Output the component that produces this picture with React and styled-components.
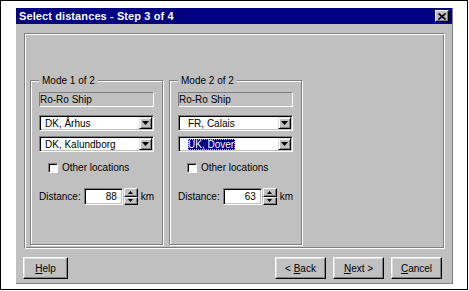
import React from "react";
import styled, { createGlobalStyle } from "styled-components";

const GlobalStyle = createGlobalStyle`
    body {
        margin: 0;
        background: #ffffff;
        font-family: "Liberation Sans", Arial, sans-serif;
    }
`;

const Frame = styled.div`
    width: 468px;
    height: 290px;
    box-sizing: border-box;
    border: 1px solid #000000;
    padding: 7px 0 0 15px;
`;

const Dialog = styled.div`
    width: 437px;
    height: 276px;
    box-sizing: border-box;
    background: #c0c0c0;
    border-right: 1px solid #808080;
    border-bottom: 1px solid #808080;
    display: flex;
    flex-direction: column;
`;

const TitleBar = styled.div`
    height: 16px;
    flex: none;
    background: #000080;
    display: flex;
    align-items: center;
    justify-content: space-between;
    padding: 0 3px 0 3px;
`;

const Title = styled.span`
    color: #ffffff;
    font-weight: bold;
    font-size: 11px;
    line-height: 16px;
    letter-spacing: 0.1px;
`;

const CloseButton = styled.div`
    width: 14px;
    height: 12px;
    box-sizing: border-box;
    background: #c0c0c0;
    border: 1px solid;
    border-color: #ffffff #000000 #000000 #ffffff;
    box-shadow: inset -1px -1px #808080;
    display: flex;
    align-items: center;
    justify-content: center;
`;

const Body = styled.div`
    padding: 9px 7px 0 8px;
`;

const Panel = styled.div`
    height: 216px;
    box-sizing: border-box;
    border: 1px solid;
    border-color: #808080 #ffffff #ffffff #808080;
    box-shadow: inset 1px 1px #ffffff, inset -1px -1px #808080;
    padding: 46px 0 0 5px;
    display: flex;
    gap: 6px;
`;

const Group = styled.div`
    position: relative;
    width: 133px;
    height: 165px;
    box-sizing: border-box;
    border: 1px solid #808080;
    box-shadow: 1px 1px 0 #ffffff, inset 1px 1px 0 #ffffff;
    padding: 11px 8px 0 8px;
    display: flex;
    flex-direction: column;
`;

const Legend = styled.span`
    position: absolute;
    top: -7px;
    left: 8px;
    padding: 0 3px;
    background: #c0c0c0;
    font-size: 10px;
    line-height: 13px;
    color: #000000;
`;

const StaticField = styled.div`
    height: 15px;
    box-sizing: border-box;
    border: 1px solid;
    border-color: #808080 #ffffff #ffffff #808080;
    font-size: 10px;
    line-height: 13px;
    color: #000000;
`;

const Combo = styled.div`
    height: 16px;
    margin-top: ${({ $gap }) => $gap}px;
    box-sizing: border-box;
    background: #ffffff;
    border: 1px solid;
    border-color: #808080 #ffffff #ffffff #808080;
    box-shadow: inset 1px 1px #000000, inset -1px -1px #c0c0c0;
    display: flex;
    align-items: center;
    padding: 1px 1px 1px ${({ $indent }) => $indent}px;
`;

const ComboText = styled.span`
    flex: 1;
    font-size: 10px;
    line-height: 11px;
    color: #000000;
`;

const Selected = styled.span`
    background: #000080;
    color: #ffffff;
    outline: 1px dotted #c0c0c0;
    outline-offset: -1px;
    padding: 0 1px 0 0;
`;

const DropButton = styled.div`
    width: 13px;
    height: 12px;
    box-sizing: border-box;
    background: #c0c0c0;
    border: 1px solid;
    border-color: #dfdfdf #000000 #000000 #dfdfdf;
    box-shadow: inset 1px 1px #ffffff, inset -1px -1px #808080;
    display: flex;
    align-items: center;
    justify-content: center;
`;

const CheckRow = styled.label`
    margin-top: 9px;
    height: 13px;
    display: flex;
    align-items: center;
    gap: 4px;
    padding-left: 9px;
    font-size: 10px;
    color: #000000;
`;

const CheckBox = styled.span`
    width: 10px;
    height: 10px;
    box-sizing: border-box;
    background: #ffffff;
    border: 1px solid;
    border-color: #808080 #ffffff #ffffff #808080;
    box-shadow: inset 1px 1px #000000;
`;

const DistanceRow = styled.div`
    margin-top: 14px;
    height: 17px;
    display: flex;
    align-items: center;
    font-size: 10px;
    color: #000000;
`;

const DistanceLabel = styled.span`
    flex: none;
    margin-right: 3px;
`;

const NumberBox = styled.div`
    width: 42px;
    height: 17px;
    box-sizing: border-box;
    background: #ffffff;
    border: 1px solid;
    border-color: #808080 #ffffff #ffffff #808080;
    box-shadow: inset 1px 1px #000000, inset -1px -1px #c0c0c0;
    text-align: right;
    padding-right: 5px;
    line-height: 15px;
`;

const Spinner = styled.div`
    width: 15px;
    height: 17px;
    margin-left: 1px;
    display: flex;
    flex-direction: column;
`;

const SpinHalf = styled.div`
    flex: 1;
    box-sizing: border-box;
    background: #c0c0c0;
    border: 1px solid;
    border-color: #ffffff #000000 #000000 #ffffff;
    box-shadow: inset -1px -1px #808080;
    display: flex;
    align-items: center;
    justify-content: center;
`;

const Unit = styled.span`
    margin-left: 3px;
`;

const ButtonBar = styled.div`
    margin-top: 8px;
    padding: 0 10px 0 7px;
    display: flex;
    justify-content: space-between;
`;

const ButtonGroup = styled.div`
    display: flex;
    gap: 7px;
`;

const Button = styled.div`
    width: ${({ $w }) => $w}px;
    height: 22px;
    box-sizing: border-box;
    background: #c0c0c0;
    border: 1px solid;
    border-color: #ffffff #000000 #000000 #ffffff;
    box-shadow: inset -1px -1px #808080, inset 1px 1px #dfdfdf;
    font-size: 10px;
    color: #000000;
    display: flex;
    align-items: center;
    justify-content: center;

    u {
        text-decoration: underline;
    }
`;

const Arrow = ({ up }) => (
    <svg width="7" height="4" viewBox="0 0 7 4">
        <path d={up ? "M3.5 0 L7 4 L0 4 Z" : "M0 0 L7 0 L3.5 4 Z"} fill="#000" />
    </svg>
);

const SmallArrow = ({ up }) => (
    <svg width="5" height="3" viewBox="0 0 5 3">
        <path d={up ? "M2.5 0 L5 3 L0 3 Z" : "M0 0 L5 0 L2.5 3 Z"} fill="#000" />
    </svg>
);

const modes = [
    { title: "Mode 1 of 2", from: "DK, Århus", to: "DK, Kalundborg", distance: 88, indent: 5 },
    { title: "Mode 2 of 2", from: "FR, Calais", to: "UK, Dover", distance: 63, indent: 9, selected: true },
];

const ModeGroup = ({ mode }) => (
    <Group>
        <Legend>{mode.title}</Legend>
        <StaticField>Ro-Ro Ship</StaticField>
        <Combo $gap={8} $indent={mode.indent}>
            <ComboText>{mode.from}</ComboText>
            <DropButton><Arrow /></DropButton>
        </Combo>
        <Combo $gap={5} $indent={mode.indent}>
            <ComboText>{mode.selected ? <Selected>{mode.to}</Selected> : mode.to}</ComboText>
            <DropButton><Arrow /></DropButton>
        </Combo>
        <CheckRow>
            <CheckBox />
            Other locations
        </CheckRow>
        <DistanceRow>
            <DistanceLabel>Distance:</DistanceLabel>
            <NumberBox>{mode.distance}</NumberBox>
            <Spinner>
                <SpinHalf><SmallArrow up /></SpinHalf>
                <SpinHalf><SmallArrow /></SpinHalf>
            </Spinner>
            <Unit>km</Unit>
        </DistanceRow>
    </Group>
);

export default function App() {
    return (
        <>
            <GlobalStyle />
            <Frame>
                <Dialog>
                    <TitleBar>
                        <Title>Select distances - Step 3 of 4</Title>
                        <CloseButton>
                            <svg width="8" height="7" viewBox="0 0 8 7">
                                <path d="M0.5 0.5 L7.5 6.5 M7.5 0.5 L0.5 6.5" stroke="#000" strokeWidth="1.6" />
                            </svg>
                        </CloseButton>
                    </TitleBar>
                    <Body>
                        <Panel>
                            {modes.map((m) => (
                                <ModeGroup key={m.title} mode={m} />
                            ))}
                        </Panel>
                    </Body>
                    <ButtonBar>
                        <Button $w={45}><span><u>H</u>elp</span></Button>
                        <ButtonGroup>
                            <Button $w={51}><span>&lt; <u>B</u>ack</span></Button>
                            <Button $w={51}><span><u>N</u>ext &gt;</span></Button>
                            <Button $w={51}><span><u>C</u>ancel</span></Button>
                        </ButtonGroup>
                    </ButtonBar>
                </Dialog>
            </Frame>
        </>
    );
}
